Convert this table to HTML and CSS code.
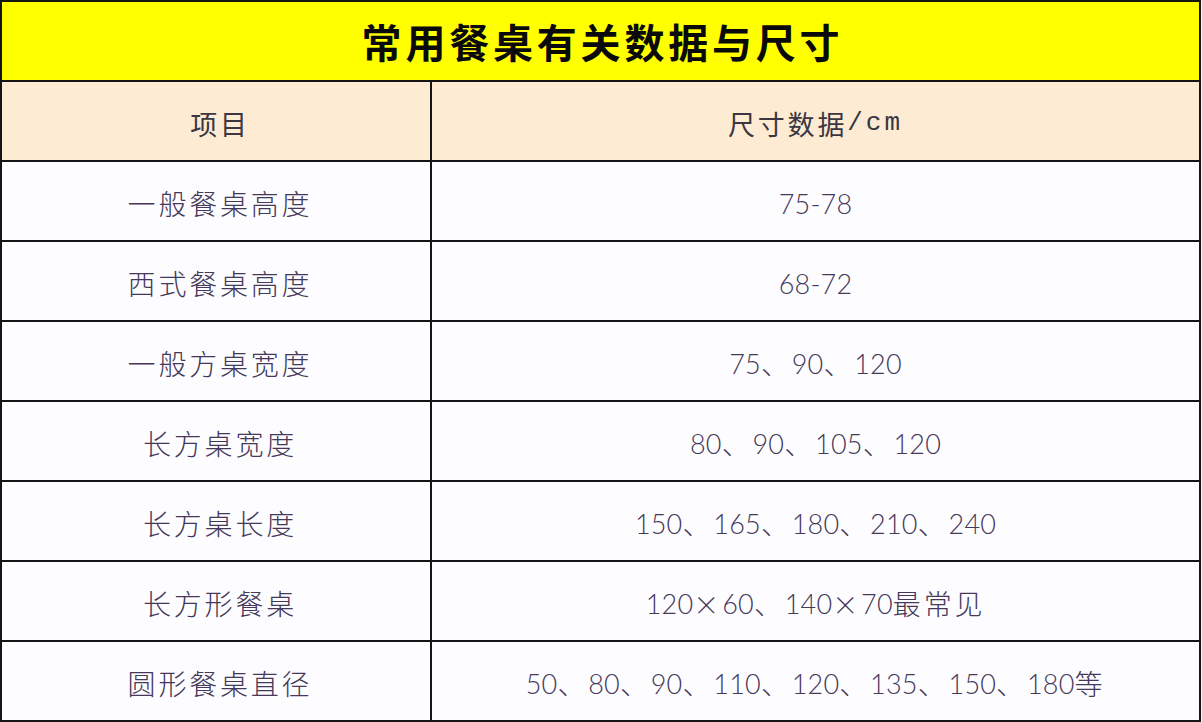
FILE: index.html
```html
<!DOCTYPE html>
<html lang="zh-CN">
<head>
<meta charset="utf-8">
<title>常用餐桌有关数据与尺寸</title>
<link rel="stylesheet" href="styles.css">
</head>
<body>
<div class="table">
  <div class="title">常用餐桌有关数据与尺寸</div>
  <div class="row head">
    <div class="cell key">项目</div>
    <div class="cell val">尺寸数据<span class="unit">/cm</span></div>
  </div>
  <div class="row">
    <div class="cell key">一般餐桌高度</div>
    <div class="cell val"><span class="num">75-78</span></div>
  </div>
  <div class="row">
    <div class="cell key">西式餐桌高度</div>
    <div class="cell val"><span class="num">68-72</span></div>
  </div>
  <div class="row">
    <div class="cell key">一般方桌宽度</div>
    <div class="cell val"><span class="num">75</span>、<span class="num">90</span>、<span class="num">120</span></div>
  </div>
  <div class="row">
    <div class="cell key">长方桌宽度</div>
    <div class="cell val"><span class="num">80</span>、<span class="num">90</span>、<span class="num">105</span>、<span class="num">120</span></div>
  </div>
  <div class="row">
    <div class="cell key">长方桌长度</div>
    <div class="cell val"><span class="num">150</span>、<span class="num">165</span>、<span class="num">180</span>、<span class="num">210</span>、<span class="num">240</span></div>
  </div>
  <div class="row">
    <div class="cell key">长方形餐桌</div>
    <div class="cell val"><span class="num">120</span><span class="times">×</span><span class="num">60</span>、<span class="num">140</span><span class="times">×</span><span class="num">70</span>最常见</div>
  </div>
  <div class="row last">
    <div class="cell key">圆形餐桌直径</div>
    <div class="cell val"><span class="num">50</span>、<span class="num">80</span>、<span class="num">90</span>、<span class="num">110</span>、<span class="num">120</span>、<span class="num">135</span>、<span class="num">150</span>、<span class="num">180</span>等</div>
  </div>
</div>
</body>
</html>
```

FILE: styles.css
```css
html, body {
  margin: 0;
  padding: 0;
  background: #fbfbfe;
}

.table {
  width: 1201px;
  height: 722px;
  box-sizing: border-box;
  border: 2px solid #151515;
  display: flex;
  flex-direction: column;
  background: #fdfdff;
}

.title {
  height: 78px;
  flex: none;
  border-bottom: 2px solid #151515;
  background: #ffff00;
  display: flex;
  align-items: center;
  justify-content: center;
  font-family: "Noto Sans CJK SC", sans-serif;
  font-weight: 700;
  font-size: 40px;
  letter-spacing: 3.8px;
  color: #0a0a0a;
  padding-left: 4px;
}

.row {
  display: grid;
  grid-template-columns: 430px 1fr;
  height: 78px;
  flex: none;
  border-bottom: 2px solid #151515;
}

.row.last {
  border-bottom: none;
}

.row.head {
  background: #fdecd3;
}

.cell {
  display: flex;
  align-items: center;
  justify-content: center;
  font-family: "Noto Sans CJK SC", sans-serif;
  font-weight: 300;
  font-size: 28px;
  letter-spacing: 2.8px;
  color: #45385a;
  padding-top: 4px;
  white-space: nowrap;
}

.cell.key {
  border-right: 2px solid #151515;
  padding-left: 8px;
}

.head .cell {
  color: #3b3642;
  font-weight: 400;
  font-size: 27px;
}

.num {
  font-family: Lato, "Liberation Sans", sans-serif;
  font-size: 27px;
  letter-spacing: 0.2px;
  font-weight: 300;
  font-variant-numeric: tabular-nums;
}

.unit {
  font-family: "Liberation Mono", monospace;
  font-size: 26px;
  letter-spacing: 3px;
  font-weight: 400;
}

.times {
  font-weight: 200;
  font-size: 26px;
}
```
